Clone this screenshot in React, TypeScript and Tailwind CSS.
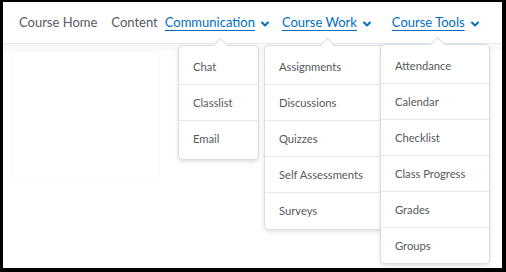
import React from "react";

const font = { fontFamily: "Lato, 'Noto Sans', sans-serif" };

function Chevron() {
  return (
    <svg className="w-[8px] h-[6px] ml-[6px] mt-[2px] shrink-0" viewBox="0 0 8 6" fill="none">
      <path d="M1 1.5l3 3 3-3" stroke="#006fbf" strokeWidth="2" strokeLinecap="round" strokeLinejoin="round" />
    </svg>
  );
}

function Menu({ items, className, arrow }: { items: string[]; className: string; arrow: string }) {
  return (
    <div className={`absolute bg-white border border-[#d8dde5] rounded-[5px] shadow-[0_2px_4px_rgba(0,0,0,0.12)] ${className}`}>
      {/* little arrow pointing at the nav item */}
      <div
        className={`absolute -top-[6px] w-[11px] h-[11px] bg-white border-l border-t border-[#d8dde5] rotate-45 ${arrow}`}
      />
      <div className="relative pt-[2px] pb-[4px]">
        {items.map((it, i) => (
          <div
            key={it}
            className={`h-[36px] flex items-center pt-[2px] pl-[14px] text-[11.2px] text-[#565a5c] whitespace-nowrap ${
              i > 0 ? "border-t border-[#e6eaf0]" : ""
            }`}
          >
            {it}
          </div>
        ))}
      </div>
    </div>
  );
}

export default function App() {
  return (
    <div className="w-[506px] h-[272px] bg-black pt-[2px] pl-[3px] pr-[4px] pb-[4px]" style={font}>
      <div className="relative w-full h-full bg-white overflow-hidden">
        {/* Nav bar */}
        <nav className="h-[42px] border-b border-[#e6eaf0] flex items-center pl-[16px] text-[13px] text-[#565a5c] whitespace-nowrap">
          <span className="shrink-0">Course Home</span>
          <span className="ml-[14px] shrink-0">Content</span>
          <span className="ml-[7px] flex items-center shrink-0 text-[#006fbf]">
            <span className="underline underline-offset-[3px]">Communication</span>
            <Chevron />
          </span>
          <span className="ml-[13px] flex items-center shrink-0 text-[#006fbf]">
            <span className="underline underline-offset-[3px]">Course Work</span>
            <Chevron />
          </span>
          <span className="ml-[21px] flex items-center shrink-0 text-[#006fbf]">
            <span className="underline underline-offset-[3px]">Course Tools</span>
            <Chevron />
          </span>
        </nav>

        {/* page body */}
        <div className="h-[7px] bg-[#f8f9fa]" />
        <div className="ml-[10px] w-[146px] h-[132px] border border-[#f9fafb] bg-white" />

        <Menu
          items={["Chat", "Classlist", "Email"]}
          className="left-[175px] top-[43px] w-[81px] h-[115px]"
          arrow="left-[36px]"
        />
        <Menu
          items={["Assignments", "Discussions", "Quizzes", "Self Assessments", "Surveys"]}
          className="left-[261px] top-[43px] w-[142px] h-[185px]"
          arrow="left-[57px]"
        />
        <Menu
          items={["Attendance", "Calendar", "Checklist", "Class Progress", "Grades", "Groups"]}
          className="left-[377px] top-[42px] w-[110px] h-[220px]"
          arrow="left-[51px]"
        />
      </div>
    </div>
  );
}
